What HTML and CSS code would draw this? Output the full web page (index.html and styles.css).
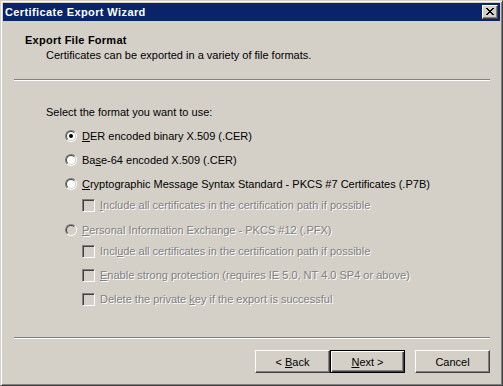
FILE: index.html
```html
<!DOCTYPE html>
<html>
<head>
<meta charset="utf-8">
<title>Certificate Export Wizard</title>
<link rel="stylesheet" href="styles.css">
</head>
<body>
<div class="window">
  <div class="titlebar">
    <span class="title">Certificate Export Wizard</span>
    <span class="close">
      <svg width="8" height="7" viewBox="0 0 8 7" shape-rendering="crispEdges">
        <path d="M0 0h2v1h1v1h2v-1h1v-1h2v1h-1v1h-1v1h-1v1h1v1h1v1h1v1h-2v-1h-1v-1h-2v1h-1v1h-2v-1h1v-1h1v-1h1v-1h-1v-1h-1v-1h-1z" fill="#000"/>
      </svg>
    </span>
  </div>

  <div class="header">
    <div class="h-title">Export File Format</div>
    <div class="h-sub">Certificates can be exported in a variety of file formats.</div>
  </div>

  <div class="sep"></div>

  <div class="content">
    <div class="prompt">Select the format you want to use:</div>
    <div class="options">
      <div class="opt radio-row">
        <span class="radio"><span class="radio-in"><span class="dot"></span></span></span>
        <span class="label"><u>D</u>ER encoded binary X.509 (.CER)</span>
      </div>
      <div class="opt radio-row">
        <span class="radio"><span class="radio-in"></span></span>
        <span class="label">Ba<u>s</u>e-64 encoded X.509 (.CER)</span>
      </div>
      <div class="opt radio-row tight">
        <span class="radio"><span class="radio-in"></span></span>
        <span class="label"><u>C</u>ryptographic Message Syntax Standard - PKCS #7 Certificates (.P7B)</span>
      </div>
      <div class="opt check-row first disabled">
        <span class="chk"></span>
        <span class="label"><u>I</u>nclude all certificates in the certification path if possible</span>
      </div>
      <div class="opt radio-row after-check disabled">
        <span class="radio"><span class="radio-in"></span></span>
        <span class="label"><u>P</u>ersonal Information Exchange - PKCS #12 (.PFX)</span>
      </div>
      <div class="opt check-row first disabled">
        <span class="chk"></span>
        <span class="label">Incl<u>u</u>de all certificates in the certification path if possible</span>
      </div>
      <div class="opt check-row disabled">
        <span class="chk"></span>
        <span class="label"><u>E</u>nable strong protection (requires IE 5.0, NT 4.0 SP4 or above)</span>
      </div>
      <div class="opt check-row disabled">
        <span class="chk"></span>
        <span class="label">Delete the private <u>k</u>ey if the export is successful</span>
      </div>
    </div>
  </div>

  <div class="sep bottom"></div>

  <div class="buttons">
    <button class="btn">&lt; <u>B</u>ack</button>
    <button class="btn default"><u>N</u>ext &gt;</button>
    <button class="btn cancel">Cancel</button>
  </div>
</div>
</body>
</html>
```

FILE: styles.css
```css
html, body {
  margin: 0;
  padding: 0;
  background: #d4d0c8;
}

body {
  font-family: "Liberation Sans", Arial, sans-serif;
  font-size: 11px;
  color: #000;
}

.window {
  width: 503px;
  height: 386px;
  box-sizing: border-box;
  border: 1px solid;
  border-color: #d4d0c8 #404040 #404040 #d4d0c8;
  box-shadow: inset 1px 1px #fff, inset -1px -1px #808080;
  padding: 2px;
  background: #d4d0c8;
  display: flex;
  flex-direction: column;
}

.titlebar {
  height: 18px;
  background: #0a246a;
  display: flex;
  align-items: center;
  padding-left: 2px;
  flex: none;
}

.title {
  color: #fff;
  font-weight: bold;
  font-size: 11px;
  letter-spacing: 0.4px;
  line-height: 18px;
}

.close {
  margin-left: auto;
  margin-right: 2px;
  width: 16px;
  height: 14px;
  box-sizing: border-box;
  background: #d4d0c8;
  border: 1px solid;
  border-color: #fff #404040 #404040 #fff;
  box-shadow: inset -1px -1px #808080;
  display: flex;
  align-items: center;
  justify-content: center;
}

.close svg {
  display: block;
  margin-left: -1px;
  margin-top: -1px;
}

.header {
  padding-top: 12px;
  padding-left: 22px;
  line-height: 15px;
}

.h-title {
  font-weight: bold;
  letter-spacing: 0.25px;
}

.h-sub {
  padding-left: 21px;
}

.sep {
  height: 0;
  border-top: 1px solid #808080;
  border-bottom: 1px solid #fff;
  margin: 16px 10px 0 11px;
}

.content {
  flex: 1;
  padding-left: 43px;
}

.prompt {
  margin-top: 24px;
  line-height: 15px;
}

.options {
  margin-top: 3px;
  padding-left: 19px;
}

.opt {
  display: flex;
  align-items: center;
  height: 16px;
  gap: 5px;
  white-space: nowrap;
  line-height: 16px;
}

.radio-row {
  margin-top: 8px;
}

.radio-row.tight {
  margin-top: 8px;
}

.radio-row.after-check {
  margin-top: 9px;
}

.check-row {
  margin-left: 17px;
  margin-top: 8px;
}

.check-row.first {
  margin-top: 5px;
}

.radio {
  width: 12px;
  height: 12px;
  box-sizing: border-box;
  border-radius: 50%;
  border: 1px solid;
  border-color: #808080 #fff #fff #808080;
  flex: none;
}

.radio-in {
  width: 10px;
  height: 10px;
  box-sizing: border-box;
  border-radius: 50%;
  border: 1px solid;
  border-color: #404040 #d4d0c8 #d4d0c8 #404040;
  background: #fff;
  display: flex;
  align-items: center;
  justify-content: center;
}

.dot {
  width: 4px;
  height: 4px;
  border-radius: 50%;
  background: #000;
}

.disabled .radio-in {
  background: #d4d0c8;
}

.chk {
  width: 13px;
  height: 13px;
  box-sizing: border-box;
  border: 1px solid;
  border-color: #808080 #fff #fff #808080;
  box-shadow: inset 1px 1px #404040, inset -1px -1px #d4d0c8;
  background: #d4d0c8;
  flex: none;
}

.disabled .label {
  color: #808080;
  text-shadow: 1px 1px 0 #fff;
}

.sep.bottom {
  margin-top: 0;
}

.buttons {
  display: flex;
  justify-content: flex-end;
  margin-top: 11px;
  margin-bottom: 10px;
  margin-right: 10px;
}

.btn {
  width: 75px;
  height: 23px;
  box-sizing: border-box;
  padding: 0;
  margin: 0;
  background: #d4d0c8;
  border: 1px solid;
  border-color: #fff #404040 #404040 #fff;
  box-shadow: inset -1px -1px #808080;
  font-family: inherit;
  font-size: 11px;
  color: #000;
  line-height: 20px;
  border-radius: 0;
}

.btn.default {
  border-color: #000;
  box-shadow: inset 1px 1px #fff, inset -1px -1px #404040, inset -2px -2px #808080;
}

.btn.cancel {
  margin-left: 10px;
}
```
